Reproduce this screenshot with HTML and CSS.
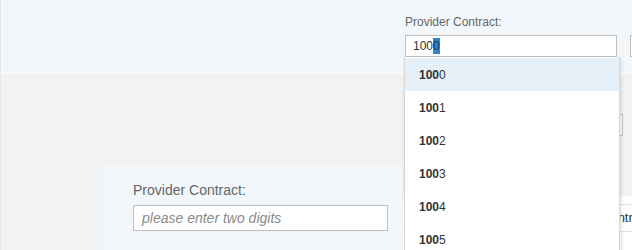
FILE: index.html
```html
<!DOCTYPE html>
<html lang="en">
<head>
<meta charset="utf-8">
<title>Provider Contract</title>
<link rel="stylesheet" href="styles.css">
</head>
<body>
<div class="page">
  <header class="toolbar">
    <div class="field">
      <div class="lbl">Provider Contract:</div>
      <div class="tinput">100<span class="sel">0</span></div>
    </div>
    <div class="field field-next">
      <div class="tinput"></div>
    </div>
  </header>
  <main class="content">
    <div class="row1">
      <div class="ginput"></div>
    </div>
    <div class="row2">
      <section class="panel">
        <div class="plbl">Provider Contract:</div>
        <div class="pinput">please enter two digits</div>
      </section>
      <div class="table">
        <div class="th">Provider Contract</div>
      </div>
    </div>
  </main>
  <ul class="dropdown">
    <li class="item active"><b>100</b>0</li>
    <li class="item"><b>100</b>1</li>
    <li class="item"><b>100</b>2</li>
    <li class="item"><b>100</b>3</li>
    <li class="item"><b>100</b>4</li>
    <li class="item"><b>100</b>5</li>
  </ul>
</div>
</body>
</html>
```

FILE: styles.css
```css
html, body {
  margin: 0;
  padding: 0;
}
body {
  font-family: "Liberation Sans", Arial, sans-serif;
  color: #333;
  background: #f2f2f2;
}
.page {
  position: relative;
  width: 632px;
  height: 250px;
  overflow: hidden;
  border-left: 1px solid #e4e8ec;
  box-sizing: border-box;
}
.toolbar {
  height: 74px;
  box-sizing: border-box;
  background: #f2f7fc;
  border-bottom: 1px solid #ffffff;
  display: flex;
  align-items: flex-end;
  gap: 13px;
  padding-left: 404px;
  padding-bottom: 16px;
}
.field {
  width: 212px;
  flex: none;
}
.lbl {
  font-size: 12px;
  line-height: 14px;
  color: #666;
  margin-bottom: 6px;
}
.tinput {
  height: 22px;
  box-sizing: border-box;
  border: 1px solid #bfbfbf;
  background: #fff;
  font-size: 12px;
  line-height: 20px;
  padding-left: 7px;
  color: #333;
}
.sel {
  background: #2f86cc;
  color: #0b3a5e;
  padding: 1px 0;
}
.content {
  background: #f2f2f2;
  height: 176px;
}
.row1 {
  display: flex;
  justify-content: flex-end;
  padding-top: 40px;
  padding-right: 9px;
}
.ginput {
  width: 200px;
  height: 22px;
  box-sizing: border-box;
  border: 1px solid #c6c6c6;
  background: #fff;
}
.row2 {
  display: flex;
  margin-top: 30px;
  padding-left: 103px;
}
.panel {
  width: 299px;
  height: 100px;
  box-sizing: border-box;
  background: #f2f7fc;
  padding: 16px 0 0 29px;
  flex: none;
}
.plbl {
  font-size: 14px;
  line-height: 17px;
  color: #666;
  margin-bottom: 6px;
}
.pinput {
  width: 255px;
  height: 26px;
  box-sizing: border-box;
  border: 1px solid #bfbfbf;
  background: #fff;
  font-size: 14px;
  line-height: 24px;
  font-style: italic;
  color: #8a8a8a;
  padding-left: 8px;
}
.table {
  flex: 1;
  margin-top: 30px;
  padding-top: 8px;
  background: #fff;
}
.th {
  height: 28px;
  box-sizing: border-box;
  border-top: 1px solid #e0e0e0;
  border-bottom: 1px solid #e0e0e0;
  font-size: 13px;
  line-height: 26px;
  padding-left: 146px;
  white-space: nowrap;
  color: #333;
}
.dropdown {
  position: absolute;
  left: 403px;
  top: 57px;
  width: 214px;
  margin: 0;
  padding: 1px 0 0;
  list-style: none;
  background: #fff;
  border: 1px solid #d6d6d6;
  border-top: 0;
  box-shadow: 1px 2px 4px rgba(0, 0, 0, 0.15);
}
.item {
  height: 33px;
  line-height: 34px;
  font-size: 12px;
  padding-left: 14px;
  color: #333;
}
.item b {
  font-weight: bold;
}
.item.active {
  background: #e6f0f8;
}
```
